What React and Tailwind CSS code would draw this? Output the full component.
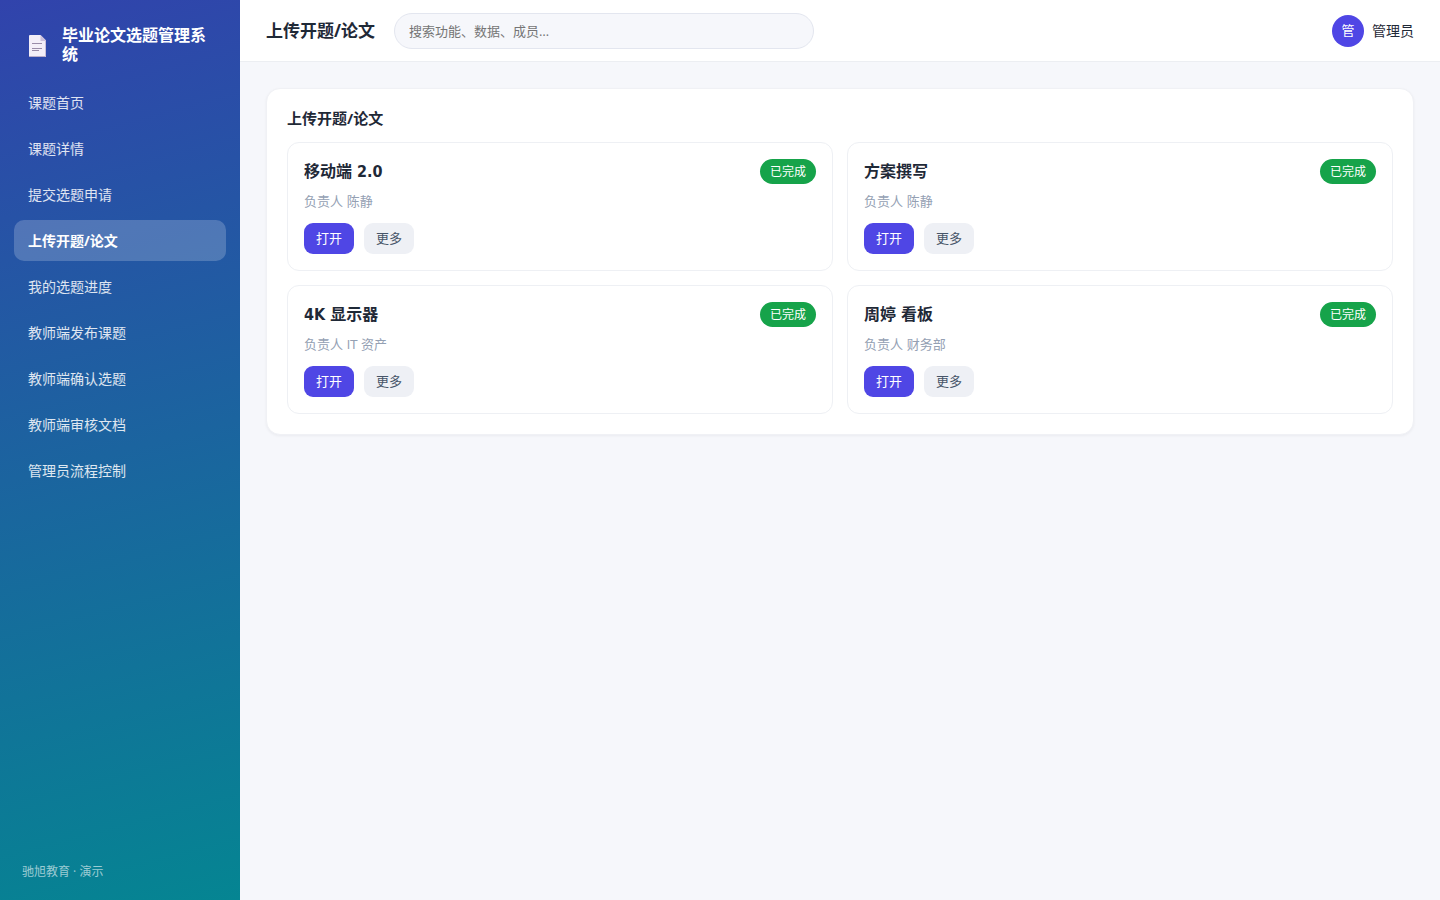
import React from "react";

const navItems = [
  "课题首页",
  "课题详情",
  "提交选题申请",
  "上传开题/论文",
  "我的选题进度",
  "教师端发布课题",
  "教师端确认选题",
  "教师端审核文档",
  "管理员流程控制",
];
const activeItem = "上传开题/论文";

const cards = [
  { title: "移动端 2.0", owner: "陈静" },
  { title: "方案撰写", owner: "陈静" },
  { title: "4K 显示器", owner: "IT 资产" },
  { title: "周婷 看板", owner: "财务部" },
];

function PageIcon() {
  return (
    <svg viewBox="0 -2 18 24" className="h-6 w-[18px] shrink-0" aria-hidden="true">
      <path d="M2 0h9.5L17 5.5V21a1 1 0 0 1-1 1H1a1 1 0 0 1-1-1V1a1 1 0 0 1 1-1z" fill="#f3eef8" />
      <path d="M11.5 0L17 5.5V6h-5.5z" fill="#cdc1dc" />
      <path d="M0 21h17v1H0z" fill="#b9adca" />
      <path d="M16.5 6v16" stroke="#c9bfd8" strokeWidth="1" />
      <path d="M3 8.5h10M3 13.5h10M3 15.5h7" stroke="#998ba8" strokeWidth="1" />
    </svg>
  );
}

function Sidebar() {
  return (
    <aside className="flex w-60 shrink-0 flex-col bg-[linear-gradient(165deg,#3143ac,#058592)] px-3.5 pb-[21px] pt-[22px]">
      <div className="flex items-center gap-[15px] px-[15px] pb-[18px] pt-1">
        <PageIcon />
        <div className="text-base font-bold leading-[19px] text-white">毕业论文选题管理系统</div>
      </div>
      <nav className="flex flex-col gap-[5px]">
        {navItems.map((item) => (
          <a
            key={item}
            href="#"
            aria-current={item === activeItem ? "page" : undefined}
            className={
              item === activeItem
                ? "flex h-[41px] items-center rounded-[10px] bg-white/20 px-3.5 text-sm font-bold text-white"
                : "flex h-[41px] items-center rounded-[10px] px-3.5 text-sm text-white/85"
            }
          >
            {item}
          </a>
        ))}
      </nav>
      <div className="mt-auto px-2 text-xs leading-[14px] text-white/60">驰旭教育 · 演示</div>
    </aside>
  );
}

function Header() {
  return (
    <header className="flex h-[62px] items-center gap-[19px] border-b border-[#eceef2] bg-white px-[26px]">
      <h1 className="shrink-0 text-[17px] font-bold">上传开题/论文</h1>
      <input
        type="search"
        aria-label="搜索"
        placeholder="搜索功能、数据、成员…"
        className="h-9 w-full max-w-[420px] rounded-full border border-[#e3e6ef] bg-[#f6f7fb] px-3.5 text-[13px] outline-none placeholder:text-[#757575]"
      />
      <div className="ml-auto flex shrink-0 items-center gap-2 text-sm">
        <span className="flex size-8 items-center justify-center rounded-full bg-[#4f46e5] text-[13px] text-white">管</span>
        <span>管理员</span>
      </div>
    </header>
  );
}

function TopicCard({ title, owner }) {
  return (
    <article className="rounded-xl border border-[#eef0f4] p-4 font-['DejaVu_Sans_Condensed','Noto_Sans_CJK_SC',sans-serif]">
      <div className="flex h-[25px] items-center justify-between">
        <h3 className="text-base font-bold">{title}</h3>
        <span className="flex h-[25px] items-center rounded-full bg-[#16a34a] px-2.5 text-xs text-white">已完成</span>
      </div>
      <p className="mt-2 text-[13px] leading-5 text-[#94a0b3]">负责人 {owner}</p>
      <div className="mt-[11px] flex gap-2.5">
        <button type="button" className="h-[31px] rounded-[9px] bg-[#4f46e5] px-3 text-[13px] text-white">打开</button>
        <button type="button" className="h-[31px] rounded-[9px] bg-[#eef0f5] px-3 text-[13px] text-[#475569]">更多</button>
      </div>
    </article>
  );
}

export default function App() {
  return (
    <div className="flex min-h-screen bg-[#f6f7fb] font-['Open_Sans','Noto_Sans_CJK_SC',sans-serif] text-[#1f2937]">
      <Sidebar />
      <div className="min-w-0 flex-1">
        <Header />
        <main className="p-[26px]">
          <section className="rounded-[14px] border border-[#f0f1f5] bg-white p-5 shadow-[0_1px_3px_rgba(15,23,42,0.05)]">
            <h2 className="mb-3.5 text-[15px] font-bold leading-[19px]">上传开题/论文</h2>
            <div className="grid grid-cols-2 gap-3.5">
              {cards.map((card) => (
                <TopicCard key={card.title} title={card.title} owner={card.owner} />
              ))}
            </div>
          </section>
        </main>
      </div>
    </div>
  );
}
